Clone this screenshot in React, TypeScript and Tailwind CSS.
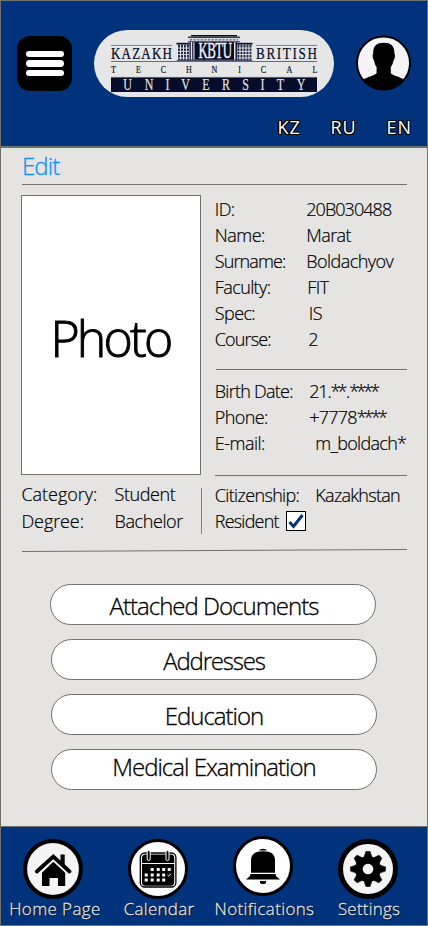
import React from "react";

const NAVY = "#050d2a";

// Condensed serif lettering: glyphs are squeezed horizontally, gaps are not.
function LogoText({ x, y, w, size, squeeze, fill = NAVY, stroke = 0.2, children }: { x: number; y: number; w: number; size: number; squeeze: number; fill?: string; stroke?: number; children: string }) {
  return (
    <text transform={`translate(${x} ${y}) scale(${squeeze} 1)`} textLength={w / squeeze} lengthAdjust="spacing" fontSize={size} fill={fill} stroke={fill} strokeWidth={stroke} fontFamily="'Liberation Serif', serif">
      {children}
    </text>
  );
}

function SpreadText({ xs, y, size, fill, squeeze, text }: { xs: number[]; y: number; size: number; fill: string; squeeze: number; text: string }) {
  return (
    <text transform={`scale(${squeeze} 1)`} y={y} fontSize={size} fill={fill} stroke={fill} strokeWidth="0.15" textAnchor="middle" fontFamily="'Liberation Serif', serif">
      {text.split("").map((c, i) => (
        <tspan key={i} x={xs[i] / squeeze}>
          {c}
        </tspan>
      ))}
    </text>
  );
}

function Wing({ x }: { x: number }) {
  return (
    <g>
      <rect x={x} y="45" width="14.5" height="15" fill="#dcdde2" />
      {[0, 1, 2, 3, 4].map((i) => (
        <rect key={i} x={x + i * 3} y="45" width="1.9" height="15" fill="#1d233c" />
      ))}
      {[0, 1, 2, 3].map((i) => (
        <rect key={i} x={x} y={47.6 + i * 3.3} width="14.5" height="0.9" fill="#e6e6e6" />
      ))}
      <rect x={x - 1.5} y="42.8" width="16.5" height="1.8" fill={NAVY} />
    </g>
  );
}

function Logo() {
  return (
    <div className="h-[67px] w-[240px] overflow-hidden rounded-full bg-[#e6e6e6]">
      <svg viewBox="94 30 240 67" width="240" height="67" className="block">
        <path d="M111 45.4h61M256 45.4h61" stroke="#777b88" strokeWidth="1" />
        <LogoText x={111} y={59.2} w={61} size={16.8} squeeze={0.78}>KAZAKH</LogoText>
        <LogoText x={256} y={59.2} w={61} size={16.8} squeeze={0.78}>BRITISH</LogoText>
        <Wing x={178} />
        <Wing x={237.5} />
        <rect x="191" y="35" width="46" height="1.6" fill={NAVY} />
        <rect x="188" y="36.5" width="52" height="1.6" fill="#3b4157" />
        <rect x="189" y="38" width="50" height="4" fill="#d3d4d9" />
        <path d="M190 39.8h48" stroke="#777b88" strokeWidth="1.4" strokeDasharray="2 1.6" />
        <rect x="188" y="41.2" width="52" height="1" fill="#3b4157" />
        <rect x="189.5" y="42" width="4" height="18" fill="#3b4157" />
        <rect x="191" y="42" width="1" height="18" fill="#e6e6e6" />
        <rect x="194.5" y="42" width="39.5" height="18.5" fill={NAVY} />
        <rect x="235.5" y="42" width="1.4" height="18" fill={NAVY} />
        <path d="M175.500 61.500l2.500-2h73l2.500 2z" fill="#4a5068" />
        <LogoText x={198.5} y={58.4} w={33.5} size={22.5} squeeze={0.57} fill="#f2f2f2" stroke={0.5}>KBTU</LogoText>
        <path d="M111 61.5h206" stroke="#666b7a" strokeWidth="1.1" />
        <SpreadText text="TECHNICAL" y={72.9} size={10.6} squeeze={0.76} fill={NAVY} xs={[113.5, 138.5, 163.5, 189, 214.5, 239.5, 263.5, 289.5, 315]} />
        <rect x="111" y="77" width="206" height="15" fill={NAVY} />
        <path d="M111 77.4h206" stroke="#777b88" strokeWidth="0.8" />
        <SpreadText text="UNIVERSITY" y={90} size={16.2} squeeze={0.74} fill="#e6e6e6" xs={[127.5, 149, 167.5, 185.5, 206, 226, 245.5, 262.5, 280.5, 301]} />
      </svg>
    </div>
  );
}

function Avatar() {
  return (
    <svg width="56" height="56" viewBox="0 0 56 56">
      <clipPath id="face">
        <circle cx="27.500" cy="28" r="27" />
      </clipPath>
      <circle cx="27.500" cy="28" r="26.500" fill="#f4f4f4" stroke="#000" strokeWidth="1.900" />
      <path
        clipPath="url(#face)"
        d="M27.800 7.700c-7.600 0-10.900 3.600-10.600 11-.9.700-.8 4.700.9 6.800.6 3.200 1.400 5.200 2.500 6.600V38.200c-2 2.400-8.600 3.300-13.100 6.300L3 57h50l-5-12.500c-4.500-3-11.200-3.900-13.200-6.300v-6.100c1.100-1.400 2.100-3.400 2.700-6.600 1.700-2.100 1.800-6.100.9-6.800.3-7.400-3-11-10.600-11z"
      />
    </svg>
  );
}

function Row({ label, children, gap = "w-[91.5px]", h = "h-[26px]", labelTracking = "", valueTracking = "" }: { label: string; children: React.ReactNode; gap?: string; h?: string; labelTracking?: string; valueTracking?: string }) {
  return (
    <div className={`flex items-center whitespace-nowrap ${h}`}>
      <span className={`shrink-0 ${gap} ${labelTracking}`}>{label}</span>
      <span className={valueTracking}>{children}</span>
    </div>
  );
}

function HomeIcon() {
  return (
    <svg width="60" height="60" viewBox="0 0 60 60">
      <circle cx="30" cy="30" r="27.900" fill="#f4f4f4" stroke="#000" strokeWidth="4" />
      <path d="M13.800 32.500L30.300 17.600 46.500 32.500" fill="none" stroke="#000" strokeWidth="3.800" strokeLinecap="round" strokeLinejoin="miter" />
      <path d="M37.500 15.500h4.200v11l-4.200-4z" />
      <path d="M30.300 22.800L42.200 33.800v13.200H35V39h-8.500v8H19V33.800z" />
    </svg>
  );
}

function CalendarIcon() {
  const dots = [
    [24, 29], [30, 29], [35.5, 29], [41, 29],
    [18, 34.5], [24, 34.5], [30, 34.5], [35.5, 34.5],
    [18, 39.5], [24, 39.5], [30, 39.5], [35.5, 39.5],
  ];
  return (
    <svg width="60" height="60" viewBox="0 0 60 60">
      <circle cx="30" cy="30" r="28.500" fill="#fff" stroke="#000" strokeWidth="3" />
      <rect x="12.300" y="14" width="35.600" height="34" rx="4.500" fill="#fff" stroke="#000" strokeWidth="1.300" />
      <path d="M14 24v-5a3.500 3.500 0 0 1 3.500-3.500h25.300A3.500 3.500 0 0 1 46.200 19v5z" />
      <path d="M14 25h32.200v18.300a3.500 3.500 0 0 1-3.500 3.500H17.500a3.500 3.500 0 0 1-3.500-3.500z" />
      {[20.7, 39.5].map((x) => (
        <rect key={x} x={x - 1.5} y="11.500" width="3" height="10" rx="1.500" fill="#000" stroke="#fff" strokeWidth="1" />
      ))}
      {dots.map(([x, y], i) => (
        <rect key={i} x={x - 1.3} y={y} width="3" height="3" fill="#fff" />
      ))}
      <path d="M39.500 36l1.200 1 2.500-2.300" fill="none" stroke="#fff" strokeWidth="1" />
    </svg>
  );
}

function BellIcon() {
  return (
    <svg width="60" height="60" viewBox="0 0 60 60">
      <circle cx="30" cy="30" r="28.500" fill="#fff" stroke="#000" strokeWidth="3" />
      <path d="M26 14.600a4.200 2.800 0 0 1 8 0z" />
      <path d="M18 36.700V24.500c0-6 3.500-9.200 12-9.200s12 3.200 12 9.200v12.200z" />
      <path d="M17.500 38h25l.5 2 4 3.600H13l4-3.600z" />
      <path d="M27 45h6v1.200a3 1.900 0 0 1-6 0z" />
    </svg>
  );
}

function GearIcon() {
  return (
    <svg width="60" height="60" viewBox="0 0 60 60">
      <circle cx="30" cy="30" r="27.500" fill="#f4f4f4" stroke="#000" strokeWidth="5" />
      {[0, 45, 90, 135, 180, 225, 270, 315].map((a) => (
        <path key={a} transform={`rotate(${a} 30 30)`} d="M25.500 20l2.400-7.500h4.200l2.400 7.500z" strokeLinejoin="round" stroke="#000" strokeWidth="0.600" />
      ))}
      <circle cx="30" cy="30" r="13" />
      <circle cx="30" cy="30" r="5.300" fill="#f4f4f4" />
    </svg>
  );
}

function NavItem({ width, raised, label, tracking, children }: { width: string; raised?: boolean; label: string; tracking: string; children: React.ReactNode }) {
  return (
    <div className={`flex shrink-0 flex-col items-center ${width}`}>
      <div className={raised ? "mt-[9px] mb-[3px]" : "mt-3"}>{children}</div>
      <span className={`mt-[-1px] whitespace-nowrap text-[17px] leading-[22px] text-[#e2e2e2] [text-shadow:0_0_1px_#000,1px_1px_1px_#111] [-webkit-text-stroke:0.3px_#e2e2e2] ${tracking}`}>{label}</span>
    </div>
  );
}

function Pill({ label, shift, tracking, pad }: { label: string; shift?: boolean; tracking: string; pad: string }) {
  return (
    <button className={`flex h-[41px] w-[326px] items-center justify-center rounded-[20.5px] border border-[#707070] bg-white text-[24px] leading-none whitespace-nowrap [-webkit-text-stroke:0.3px_#000] ${shift ? "ml-px" : ""} ${tracking} ${pad}`}>
      {label}
    </button>
  );
}

const LANG = "text-[18px] leading-[24px] tracking-[1px] text-white [text-shadow:1px_0_0_#000,-1px_0_0_#000,0_1px_0_#000,0_-1px_0_#000,1px_1px_0_#000,-1px_-1px_0_#000,1px_-1px_0_#000,-1px_1px_0_#000]";

export default function App() {
  return (
    <div className="flex h-[926px] w-[428px] flex-col overflow-hidden border border-[#707070] bg-[#e5e4e2] font-['Open_Sans','Noto_Sans',sans-serif] font-light text-black">
      <header className="flex h-[147px] shrink-0 flex-col border-b-2 border-[#707070] bg-[#00337c]">
        <div className="flex items-start pl-4 pt-[29px]">
          <div className="mt-[6px] flex h-[55px] w-[55px] flex-col items-center justify-center gap-[3px] rounded-[13px] bg-black">
            <span className="h-[6.5px] w-[38px] rounded-full bg-white" />
            <span className="h-[6.5px] w-[38px] rounded-full bg-white" />
            <span className="h-[6.5px] w-[38px] rounded-full bg-white" />
          </div>
          <div className="ml-[22px]">
            <Logo />
          </div>
          <div className="ml-[22px] mt-[5px]">
            <Avatar />
          </div>
        </div>
        <nav className="mt-[18px] flex pl-[276.5px] font-normal">
          <span className={`w-[53px] ${LANG}`}>KZ</span>
          <span className={`w-[56px] ${LANG}`}>RU</span>
          <span className={LANG}>EN</span>
        </nav>
      </header>

      <main className="flex h-[678px] shrink-0 flex-col pl-5">
        <h1 className="h-9 pl-px text-[24px] leading-[35px] tracking-[-0.9px] text-[#0d93ff] [-webkit-text-stroke:0.3px_#0d93ff]">Edit</h1>
        <div className="ml-px h-px w-[385px] bg-[#707070]" />
        <div className="flex pt-[10px] text-[18px] tracking-[-0.6px] [-webkit-text-stroke:0.2px_#000]">
          <section className="w-[181px] shrink-0">
            <div className="flex h-[280px] w-[180px] items-center justify-center border border-[#707070] bg-white text-[50px] leading-none tracking-[-2.8px] [-webkit-text-stroke:0.9px_#000]">
              <span className="pt-[5px] pr-px">Photo</span>
            </div>
            <div className="mt-[6px] flex">
              <div className="w-[180px] pl-[0.5px]">
                <Row label="Category:" gap="w-[93px]" h="h-[27px]" labelTracking="tracking-[-0.05px]" valueTracking="tracking-[-0.4px]">Student</Row>
                <Row label="Degree:" gap="w-[93px]" h="h-[27px]" labelTracking="tracking-[-0.1px]" valueTracking="tracking-[-0.4px]">Bachelor</Row>
              </div>
              <div className="mt-[7px] h-[46px] w-px shrink-0 bg-[#808080]" />
            </div>
          </section>
          <section className="ml-[12px] mt-px w-[193px] pl-[0.8px]">
            <Row label="ID:">
              <span className="tracking-[-0.95px]">20B030488</span>
            </Row>
            <Row label="Name:" labelTracking="tracking-[-0.5px]">Marat</Row>
            <Row label="Surname:" labelTracking="tracking-[-0.9px]" valueTracking="tracking-[-0.55px]">Boldachyov</Row>
            <Row label="Faculty:" labelTracking="tracking-[-0.6px]">
              <span className="pl-px">FIT</span>
            </Row>
            <Row label="Spec:" gap="w-[94px]">IS</Row>
            <Row label="Course:" gap="w-[93.5px]" labelTracking="tracking-[-0.85px]">2</Row>
            <div className="ml-[1.2px] mt-[17px] mb-2 h-px bg-[#707070]" />
            <Row label="Birth Date:" gap="w-[94.5px]" labelTracking="tracking-[-0.75px]" valueTracking="tracking-[-1.2px]">
              21.<span className="tracking-[-2.9px]">**</span><span className="pl-[1.5px]">.</span><span className="tracking-[-2.9px]">****</span>
            </Row>
            <Row label="Phone:" gap="w-[94.5px]" valueTracking="tracking-[-0.8px]">
              +7778<span className="tracking-[-2.8px]">****</span>
            </Row>
            <Row label="E-mail:" gap="w-[100.5px]" labelTracking="tracking-[-0.5px]" valueTracking="tracking-[-0.7px]">m_boldach*</Row>
            <div className="mt-[19px] mb-[6px] h-px bg-[#707070]" />
            <Row label="Citizenship:" gap="w-[100.5px]" labelTracking="tracking-[-0.65px]" valueTracking="tracking-[-0.7px]">Kazakhstan</Row>
            <Row label="Resident" gap="w-[71.2px]" labelTracking="tracking-[-0.8px]">
              <span className="flex h-5 w-5 items-center justify-center border border-black bg-white">
                <svg width="18" height="18" viewBox="0 0 18 18">
                  <path d="M2.500 10l4 4.500L15.500 3" fill="none" stroke="#00337c" strokeWidth="3" />
                </svg>
              </span>
            </Row>
          </section>
        </div>
        <svg width="386" height="3" viewBox="0 0 386 3" className="mt-[14px] ml-px block shrink-0">
          <path d="M0 2.500L385 0.500" stroke="#707070" strokeWidth="1" />
        </svg>
        <div className="ml-[29px] mt-[32px] flex flex-col gap-[14px]">
          <Pill label="Attached Documents" tracking="tracking-[-1px]" pad="pt-[2px] pl-[2px]" />
          <Pill label="Addresses" shift tracking="tracking-[-1.2px]" pad="pt-[2px]" />
          <Pill label="Education" shift tracking="tracking-[-1px]" pad="pt-[2px]" />
          <Pill label="Medical Examination" shift tracking="tracking-[-1px]" pad="pb-[6px]" />
        </div>
      </main>

      <footer className="flex h-[99px] shrink-0 border-t border-[#707070] bg-[#00337c]">
        <NavItem width="w-[104px]" label="Home Page" tracking="tracking-[0.4px] pl-1"><HomeIcon /></NavItem>
        <NavItem width="w-[106px]" label="Calendar" tracking="tracking-[0.25px] pl-[2px]"><CalendarIcon /></NavItem>
        <NavItem width="w-[104px]" raised label="Notifications" tracking="tracking-[0.35px] pl-[3px]"><BellIcon /></NavItem>
        <NavItem width="w-[106px]" label="Settings" tracking="tracking-[0.2px] pl-[2px]"><GearIcon /></NavItem>
      </footer>
    </div>
  );
}
